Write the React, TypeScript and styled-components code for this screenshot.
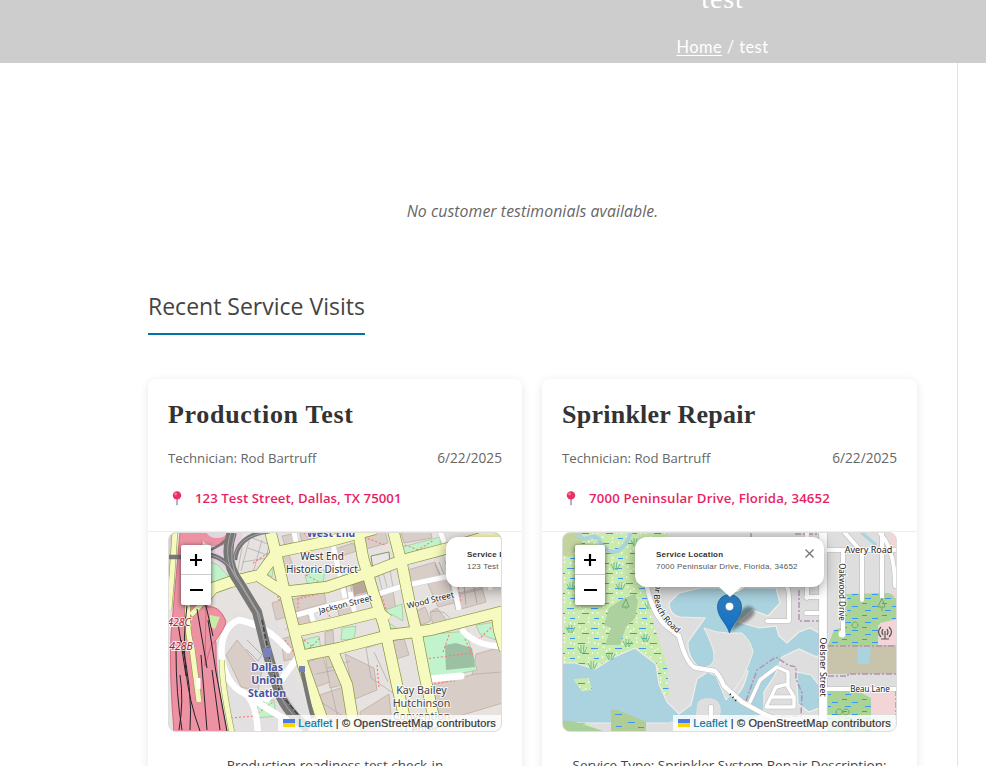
import React from "react";
import styled, { createGlobalStyle } from "styled-components";

const Global = createGlobalStyle`
  * { box-sizing: border-box; }
  html, body { margin: 0; background: #fff; overflow: hidden; }
  body { font-family: "Open Sans", "Noto Sans", sans-serif; color: #666; }
`;

const Page = styled.div`
  height: 766px;
  display: flex;
  flex-direction: column;
  overflow: hidden;
`;

const Banner = styled.header`
  flex: 0 0 63px;
  background: #cdcdcd;
  color: #fff;
  padding-left: 459px;
  overflow: hidden;
  text-align: center;
`;

const BannerTitle = styled.h1`
  margin: -20px 0 0;
  font: 400 28px/38px "Liberation Serif", serif;
  letter-spacing: 0.9px;
`;

const Crumbs = styled.nav`
  margin-top: 17px;
  font: 400 16.5px/24px Lato, sans-serif;
  letter-spacing: 0.4px;
  a { color: #fff; text-decoration: underline; text-underline-offset: 2px; }
`;

const Content = styled.main`
  flex: 1;
  width: 958px;
  border-right: 1px solid #e2e2e2;
  padding: 136px 40px 0 148px;
`;

const EmptyNote = styled.p`
  margin: 0;
  text-align: center;
  font-style: italic;
  font-size: 15.8px;
  line-height: 24px;
  letter-spacing: 0.08px;
`;

const SectionTitle = styled.h2`
  display: inline-block;
  margin: 64px 0 0;
  height: 48px;
  width: 217px;
  white-space: nowrap;
  border-bottom: 2px solid #0073aa;
  color: #444;
  font-weight: 400;
  font-size: 23px;
  line-height: 38px;
`;

const Grid = styled.div`
  margin-top: 44px;
  display: grid;
  grid-template-columns: 374px 375px;
  gap: 20px;
`;

const Card = styled.article`
  height: 460px;
  background: #fff;
  border-radius: 8px;
  box-shadow: 0 2px 10px rgba(0, 0, 0, 0.1);
`;

const CardHead = styled.div`
  height: 153px;
  padding: 20px 20px 0;
  border-bottom: 1px solid #eee;
`;

const CardTitle = styled.h3<{ $track: number }>`
  margin: 0;
  color: #333;
  font: 700 26px/32px "Liberation Serif", serif;
  letter-spacing: ${(p) => p.$track}px;
`;

const Meta = styled.div`
  display: flex;
  justify-content: space-between;
  margin-top: 17px;
  font-size: 13.2px;
  line-height: 20px;
  time { font-size: 13.7px; }
`;

const Address = styled.div<{ $track: number }>`
  display: flex;
  align-items: center;
  margin-top: 20px;
  height: 20px;
  color: #e91e63;
  font-size: 13.2px;
  font-weight: 600;
  letter-spacing: ${(p) => p.$track}px;
  svg { margin: 1px 12px 0 4px; }
`;

const MapFrame = styled.div`
  position: relative;
  height: 200px;
  margin: 0 20px;
  border: 1px solid #ddd;
  border-radius: 8px;
  overflow: hidden;
  background: #ddd;
`;

const MapCanvas = styled.svg`
  display: block;
  width: 100%;
  height: 100%;
`;

const ZoomBar = styled.div`
  position: absolute;
  left: 12px;
  top: 12px;
  width: 30px;
  border-radius: 2px;
  background: #fff;
  box-shadow: 0 1px 5px rgba(0, 0, 0, 0.65);
`;

const ZoomButton = styled.button`
  display: grid;
  place-items: center;
  width: 30px;
  height: 30px;
  padding: 0;
  border: 0;
  background: transparent;
  &:first-child { border-bottom: 1px solid #ccc; }
`;

const Popup = styled.div<{ $left: number }>`
  position: absolute;
  left: ${(p) => p.$left}px;
  top: 4px;
  width: 189px;
  height: 50px;
  padding: 12px 0 0 21px;
  border-radius: 12px;
  background: #fff;
  box-shadow: 0 3px 14px rgba(0, 0, 0, 0.4);
  color: #333;
  font: 400 8px/11px "Liberation Sans", sans-serif;
  letter-spacing: 0.2px;
  white-space: nowrap;
  strong { display: block; font-size: 8px; line-height: 12px; color: #333; }
  span { color: #555; }
`;

const Close = styled.svg`
  position: absolute;
  right: 10px;
  top: 12px;
`;

const Tip = styled.svg`
  position: absolute;
  left: 151px;
  top: 53px;
`;

const Attribution = styled.div`
  position: absolute;
  right: 0;
  bottom: 0;
  display: flex;
  align-items: center;
  height: 16px;
  padding: 0 5px 1px;
  background: rgba(255, 255, 255, 0.8);
  color: #333;
  font: 400 11px/14px "Liberation Sans", sans-serif;
  letter-spacing: 0.17px;
  -webkit-text-stroke: 0.2px currentColor;
  white-space: pre;
  a { color: #0078a8; }
  svg { margin-right: 3px; }
`;

const Body = styled.p`
  margin: 22px 10px 0;
  text-align: center;
  color: #444;
  font-size: 13.5px;
  line-height: 22px;
  white-space: nowrap;
`;

function PushPin() {
  return (
    <svg width="11" height="15" viewBox="0 0 11 15">
      <path d="M4.2 7h1.7v7.2H4.2z" fill="#a9a3b3" />
      <circle cx="5" cy="4.4" r="4.2" fill="#ec2f65" />
      <circle cx="3.6" cy="3" r="1.4" fill="#ff7898" />
    </svg>
  );
}

function ZoomControls() {
  return (
    <ZoomBar>
      <ZoomButton aria-label="Zoom in">
        <svg width="14" height="14"><path d="M1 7h12M7 1v12" stroke="#000" strokeWidth="2.2" /></svg>
      </ZoomButton>
      <ZoomButton aria-label="Zoom out">
        <svg width="14" height="14"><path d="M1 7h13" stroke="#000" strokeWidth="2" /></svg>
      </ZoomButton>
    </ZoomBar>
  );
}

function Credits() {
  return (
    <Attribution>
      <svg width="12" height="8"><path d="M0 0h12v4H0z" fill="#4C7BE1" /><path d="M0 4h12v4H0z" fill="#FFD500" /></svg>
      <a>Leaflet</a> | © OpenStreetMap contributors
    </Attribution>
  );
}

const arterials = [
  "M188 622L193 612L213 588L230 582L260 575L277 552L330 541L375 529",
  "M270 530L277 558L283 585L293 625L303 665L327 733",
  "M260 577L283 592L327 587L375 571L403 560L445 549L505 531",
  "M293 632L330 624L378 612L388 620",
  "M296 657L340 648L390 635L430 630L505 611",
  "M358 530L363 558L373 592L384 625L397 685L408 733",
  "M393 530L402 565L410 605L416 630L424 672L437 733",
  "M333 652L347 685L355 733",
  "M497 614L499 630L505 650",
];
const minors = [
  "M293 616L340 603L375 595L403 586L445 577L505 563",
  "M310 609L316 632", "M350 592L356 618", "M445 549L452 575L459 610",
  "M484 570L491 590", "M294 532L297 546", "M440 531L447 549", "M333 545L345 598",
];
const blocks = [
  "282,536 292,534 296,546 286,549", "300,533 312,532 314,541 302,544", "364,535 385,531 388,543 366,549",
  "335,549 353,543 357,551 338,557", "401,533 430,529 432,538 404,543", "279,558 289,554 294,570 283,573",
  "350,584 365,580 369,593 353,597", "291,600 324,590 326,603 295,612", "295,618 308,615 312,631 299,633",
  "378,595 393,591 396,610 382,613", "404,571 435,562 441,576 408,584", "427,582 448,578 458,602 438,607",
  "416,611 425,607 431,621 421,625", "430,612 437,608 448,622 433,625", "455,594 482,587 486,602 458,610",
  "337,605 350,602 355,618 340,622", "281,639 292,636 296,658 284,661", "325,632 333,630 334,648 325,650",
  "306,663 323,656 330,682 313,688", "325,654 338,651 346,684 330,688", "317,696 346,686 353,715 327,722",
  "345,654 374,668 377,690 355,699", "393,641 404,638 409,655 396,659", "476,654 505,646 505,690 472,675",
  "428,686 475,674 503,672 503,703 442,721", "360,712 389,694 392,725 361,731", "226,655 237,640 262,670 258,691 241,687",
  "272,603 284,599 286,617 276,620", "168,535 174,535 174,590 168,587", "478,538 502,532 502,547 485,549",
];
const greens = [
  "210,562 218,565 232,580 211,582", "264,571 274,562 272,577", "269,582 280,583 276,590",
  "305,575 325,570 323,583 308,586", "402,547 440,537 441,552 405,560", "422,635 468,631 469,642 477,670 429,680",
  "375,614 402,604 403,621 393,615", "385,627 391,624 399,630", "476,625 496,622 496,640 480,634",
  "210,616 219,618 215,631 209,627", "303,640 319,636 321,650 306,653", "258,703 274,700 276,716 257,718",
  "342,628 356,626 354,639 341,640",
];

function DallasMap() {
  return (
    <MapCanvas viewBox="169 533 332 198" preserveAspectRatio="none">
      <rect x="160" y="525" width="350" height="215" fill="#e6e2df" />
      <path d="M203 532h40l-10 45-23-22z" fill="#e6d3e0" />
      <path d="M207 653l27-40 42 8 38 110h-87z" fill="#e2e0e0" />
      {blocks.map((p) => <polygon key={p} points={p} fill="#d8cdc7" stroke="#bba99e" strokeWidth=".7" />)}
      {greens.map((p) => <polygon key={p} points={p} fill="#c1f4cc" stroke="#9eb98b" strokeWidth=".6" />)}
      <polygon points="445,645 456,643 472,648 475,667 446,670" fill="#9dbfa4" />
      <polygon points="371,556 389,552 390,565 373,569" fill="#e9e7e7" stroke="#90945a" />
      <polygon points="352,584 364,581 368,592 354,595" fill="#b9a79d" />
      <g stroke="#aaa" fill="none" strokeWidth=".7">
        <path d="M247 536l26 10-4 22M243 542l-6 33 26-6M248 548l22 8M242 562l26-4M250 537l-9 34M262 540l-9 33M269 545l-6 26" />
        <path d="M374 575l16-5 3 17-15 4zM378 574l4 15M383 572l4 15M332 590l14-5 2 15-15 4M166 650v80M174 690v41M366 648l18-6 12 53-25-17zM374 652l14 30M328 668l22-7M316 674l19-4M338 657l10 28M457 595l25-6M456 610l-8-31M430 612q17-5 23 13M285 630l5-4M318 700l31 20M331 688l8 35M469 538l5 23" />
        <path d="M435 564l5 12M439 562l5 12M445 560l4 12M464 585l2 20M473 583l4 20M247 640l15 15-4 6-12-12" stroke="#9f9ba2" />
      </g>
      <g stroke="#ff7676" strokeWidth="1.1" strokeDasharray="2 2" fill="none">
        <path d="M304 533l8 9 20-3M253 563l15-10M278 592v8l10-1M306 575l17 9M364 537l21 8M405 545l32 12M407 557l27-17M318 594l-20 5v20M325 608l8 14M380 592l7 20M452 552l9 50M355 594v20M304 640l18 14M304 654l16-16M425 659l47-6M449 635l-6 17M465 639l8 17M377 665l2 22M231 718l23-2 19-14M285 640l14 20M478 640l18-17M426 684l29-3" />
      </g>
      <g fill="none" stroke="#cfcfcf" strokeWidth="6">{minors.map((d) => <path key={d} d={d} />)}</g>
      <g fill="none" stroke="#fff" strokeWidth="5">{minors.map((d) => <path key={d} d={d} />)}</g>
      <g fill="none" stroke="#fff" strokeLinecap="round">
        <path d="M239 620C213 629 217 681 244 693Q256 700 258 733M239 620Q267 625 288 650M298 657L267 699L250 694M244 693Q270 711 287 720" strokeWidth="6.5" />
        <path d="M429 679l32-3" strokeWidth="7" />
        <path d="M463 631q13 14 34 15" strokeWidth="6" />
      </g>
      <g fill="none" stroke="#8c963f" strokeWidth="12">{arterials.map((d) => <path key={d} d={d} />)}</g>
      <g fill="none" stroke="#f7fabf" strokeWidth="10.6">{arterials.map((d) => <path key={d} d={d} />)}</g>
      <path d="M175 531L172 575L169 610M222 660Q221 680 232 733" stroke="#8c963f" strokeWidth="6" fill="none" />
      <path d="M175 531L172 575L169 610M222 660Q221 680 232 733" stroke="#f7fabf" strokeWidth="5" fill="none" />
      <g fill="#ec92a2" stroke="#cb5d75" strokeWidth=".8">
        <path d="M180 532h22q-1 42 5 73l9 38q-1 35 11 90h-53q-5-60-3-99z" />
        <path d="M206 607q13-3 20 14 0 7-15 25l-6 20z" />
      </g>
      <path d="M202 532q3 10 15 10 12 0 15-10" fill="none" stroke="#ec92a2" strokeWidth="8" />
      <polygon points="210,615 220,617 215,629 210,627" fill="#c9eba8" />
      <path d="M188 600q-2 30 4 48l7 54M191 615l15-16" stroke="#8c963f" strokeWidth="6" fill="none" />
      <path d="M188 600q-2 30 4 48l7 54M191 615l15-16" stroke="#f7fabf" strokeWidth="5" fill="none" />
      <path d="M187 606q-9 65 13 125M176 650q0 45 6 80M181 640q12 50 9 90M197 609l10 59M208 620l8 52 11 59M201 655l6 75M178 623l8 53M180 675q4 26-1 55M205 602l8 34M212 670l8 60" stroke="#27222a" strokeWidth="1" fill="none" />
      <path d="M196.500 678h4v11h-4z" fill="#fff" />
      <g fill="none" stroke="#777">
        <path d="M168 557h14M210 555q17 3 28 24" strokeWidth="4.500" />
        <path d="M205 552q20-7 27-20" strokeWidth="2.500" />
        <path d="M235 560q2-25 35-29" strokeWidth="4.500" />
        <path d="M232 532Q222 560 240 584L257 612L266 648L277 686Q283 710 309 729" strokeWidth="10" />
        <path d="M302 670q7 34 11 48" strokeWidth="4" />
      </g>
      <g fill="none" stroke="#bbb" strokeWidth=".7">
        <path d="M231 532Q221 560 240 584L257 612L266 648L277 686Q283 710 309 729M235 533q-10 30 8 54l16 27 9 36 12 37 19 27" />
        <path d="M234 560q2-24 35-28M210 555q17 3 28 24" />
      </g>
      <path d="M262 620l8 41 10 32 20 24" fill="none" stroke="#444" strokeWidth="1.600" strokeDasharray="5 2" />
      <path d="M263 648h8v9h-8zM299 666h6v6h-6z" fill="#7981b6" />
      <g fontFamily="Noto Sans, sans-serif" textAnchor="middle" stroke="#fff" strokeWidth="2" paintOrder="stroke" strokeOpacity=".8">
        <g fontSize="10" fill="#333">
          <text x="322" y="560">West End</text><text x="322" y="573">Historic District</text>
        </g>
        <g fontSize="8.300" fill="#222">
          <text transform="translate(346 607) rotate(-14)">Jackson Street</text>
          <text transform="translate(431 603) rotate(-14)">Wood Street</text>
        </g>
        <g fontSize="10.700" fill="#444">
          <text x="421.500" y="694">Kay Bailey</text><text x="421.500" y="707">Hutchinson</text><text x="421.500" y="720">Convention</text><text x="421.500" y="733">Center</text>
        </g>
        <g fontSize="10.600" fontWeight="700" fill="#4752a3">
          <text x="331" y="537">West End</text>
          <text x="267" y="671">Dallas</text><text x="267" y="684">Union</text><text x="267" y="697">Station</text>
        </g>
        <g fontSize="10.500" fontStyle="italic" fill="#a91e30"><text x="179" y="626">428C</text><text x="181" y="650">428B</text></g>
      </g>
    </MapCanvas>
  );
}

const reeds = [[615, 567], [620, 587], [585, 602], [649, 606], [570, 630], [582, 650], [645, 639], [627, 644], [610, 657], [592, 666], [571, 587], [635, 543]];

function FloridaMap() {
  return (
    <MapCanvas viewBox="563 533 333 198" preserveAspectRatio="none">
      <defs>
        <pattern id="marsh" width="24" height="20" patternUnits="userSpaceOnUse">
          <rect width="24" height="20" fill="#c9ebae" />
          <path d="M2 3.500h7M15 8.500h7M6 13.500h7M18 18.500h5" stroke="#3a96f5" strokeWidth="1.100" />
          <path d="M12 2h1.300M18 3h1.300M3 7h1.300M9 9h1.300M16 13h1.300M2 17h1.300M12 18h1.300M21 13h1.300M22 4h1.300M6 11h1.300" stroke="#fff" strokeWidth="1.400" />
        </pattern>
        <pattern id="wood" width="20" height="12" patternUnits="userSpaceOnUse">
          <rect width="20" height="12" fill="#aad495" />
          <path d="M2 3.500h5M12 6.500h6M5 10.500h6" stroke="#3a96f5" />
        </pattern>
        <linearGradient id="pin" x1="0" y1="0" x2="0" y2="1"><stop stopColor="#2e7ebd" /><stop offset="1" stopColor="#126fc6" /></linearGradient>
        <filter id="soft"><feGaussianBlur stdDeviation="1.7" /></filter>
      </defs>
      <rect x="555" y="525" width="350" height="215" fill="#dedede" />
      <path d="M560 530h115q-32 20-31 48l10 48 13 39 2 30-107 40z" fill="url(#marsh)" />
      <path d="M562 533h20v10l-12 14-8-2z" fill="#c2d39e" />
      <path d="M577 530q2 11 11 8 10-5 13 6 10 11 17 7 10-7 13-20" fill="none" stroke="#aad3df" strokeWidth="4" />
      <path d="M624 598l11-4 3 7-3 17-9 9-6 18h-15l6-17-7-3 5-17z" fill="#add19e" />
      <g fill="#aad3df" stroke="#f1eee8" strokeWidth="1.2">
        <path d="M558 663h17l20 6 17-11 23-10 21 16 3 20 8 18 12 12 12-9 6-26 11-7 13 5 7 15 5 6q10-5 15-27l-28-2-18 1q-15-11-14-28l17-24-24-1q-11-1-12-14l10-10 22-5h75l4 15-12 13-16-6-13 12 20 6 17-2 3 10 8 7 12-11 11-4 11 6 6 12-10 11-18-8-17 8-7 18-11 17v22l-19 9H558z" />
        <path d="M797 672l14 3 8 10 2 22-12 5-11-8-1-20z" />
      </g>
      <path d="M704 628q12 5 24 5h14q9 8 11 19-4 13-9 23l-11 17-7 8-10-24-18-8q18 1 16-14-1-8-10-26z" fill="#dedede" stroke="#f1eee8" />
      <path d="M697 706q0-8 13-8 10 1 11 12l-3 21h-24z" fill="#dedede" />
      <path d="M573 679l16-1 3 12-10 1z" fill="url(#marsh)" />
      <path d="M560 721q10-1 19 2l24 8h-43z" fill="#a9cf9b" />
      <path d="M611 710h7l28 12v10h-35z" fill="#b1cc94" />
      <path d="M615 714.500h7M628 722.500h7M616 726.500h6M638 727.500h6" stroke="#3a96f5" />
      <path d="M660 732v-6l12-5 10 10" fill="#dedede" />
      <g fill="none" stroke="#69b985" strokeWidth=".9">
        {reeds.map(([x, y]) => <path key={`${x}-${y}`} d={`M${x - 4} ${y - 3}l3 6M${x - 1} ${y - 5}v8M${x + 2} ${y - 5}l-1 8M${x + 5} ${y - 3}l-3 6`} />)}
      </g>
      <path d="M845 594l44-1 7 4v22l-18 6v20h-50l6-15 11-3z" fill="url(#wood)" />
      <path d="M888 532h10v66h-4V555zM880 623l17-4v28h-17z" fill="#f3d5d7" />
      <path d="M828 645h70v29h-70z" fill="#c8c4ab" />
      <path d="M857 647h14l-2 17h-11z" fill="#aad3df" />
      <path d="M828 691h30l13 7v34h-43z" fill="url(#wood)" />
      <path d="M871 692h27v22h-27z" fill="#f3d5d7" />
      <path d="M861 532l15 13" stroke="#aad3df" strokeWidth="3" />
      <g fill="none" stroke="#b590b1" strokeWidth="1.5" strokeDasharray="6 2 2 2">
        <path d="M795 534h28v80M751 533v15M799 590v31h25v110M828 646h69M828 676h20v-2h48M896 690v35M746 701l11-31 19-13 12 8 8 2v12l6 14-1 23h-20" />
      </g>
      {["#bbb", "#fff"].map((c, i) => (
        <g key={c} fill="none" stroke={c} strokeLinecap="round" strokeLinejoin="round">
          <path d="M823 530v204" strokeWidth={9 - i * 1.2} />
          <path d="M800 550h100M843 550v84M862 600v-48l-18-20M882 597v-65M877 530q18 16 18 56M823 689h80M823 597h-17M823 613h-17" strokeWidth={5 - i} />
          <path d="M786 560v25q3 5 3 10v26h-22M737 590l12-7h37M807 533v65" strokeWidth={5 - i} />
          <path d="M645 575q5 36 20 50l14 11q8 31 18 32l18 3q5 5 9 15l18 16 20 11 23 10M711 707v20" strokeWidth={5.5 - i} />
          <path d="M750 702l10-22 17-13 11 5v15l6 10v10h-28l10-20 12-3M772 697h21" strokeWidth={4.5 - i} />
        </g>
      ))}
      <circle cx="842" cy="634" r="3.500" fill="#fff" />
      <path d="M730 694l7 8" stroke="#222" strokeWidth="2" strokeDasharray="1 3" />
      <g fill="none" stroke="#72a66e"><path d="M882 598l-4 9h7zM882 607v4M626 599l-4 8h7zM626 607v2M839 709a3 3 0 1 0 .1 0zM846 709a3 3 0 1 0 .1 0zM839 715v4M846 715v4M855 622a3 3 0 1 0 .1 0z" /></g>
      <g fill="none" stroke="#555" strokeWidth="1.2"><path d="M881 627q-5 5 0 10M889 627q5 5 0 10M883 629q-2 3 0 6M887 629q2 3 0 6M885 631v8M881 639h8" /></g>
      <g fontFamily="Noto Sans, sans-serif" fontSize="8.5" textAnchor="middle" fill="#222" stroke="#fff" strokeWidth="2" paintOrder="stroke" strokeOpacity=".85">
        <text x="868.500" y="553" fontSize="9">Avery Road</text>
        <text x="870" y="692" fontSize="8">Beau Lane</text>
        <text transform="translate(839 592) rotate(90)" fontSize="8">Oakwood Drive</text>
        <text transform="translate(819.500 667) rotate(90)" fontSize="8.800">Oelsner Street</text>
        <path id="beach" d="M657 583Q650 596 659 613Q666 626 688 642" fill="none" stroke="none" />
        <text textAnchor="start"><textPath href="#beach" startOffset="1">or Beach Road</textPath></text>
      </g>
      <path d="M730 632l10-20q7-9 13-4 5 5-6 13z" fill="#000" opacity=".4" filter="url(#soft)" />
      <path d="M729.500 633c-2-9-12-15-12-26.500a12 12 0 0 1 24 0c0 11.500-10 17.500-12 26.500z" fill="url(#pin)" stroke="#2369a2" />
      <circle cx="729.500" cy="606.500" r="4.300" fill="#fff" stroke="#2369a2" strokeWidth=".7" />
    </MapCanvas>
  );
}

export default function App() {
  return (
    <Page>
      <Global />
      <Banner>
        <BannerTitle>test</BannerTitle>
        <Crumbs><a>Home</a> / test</Crumbs>
      </Banner>
      <Content>
        <EmptyNote>No customer testimonials available.</EmptyNote>
        <SectionTitle>Recent Service Visits</SectionTitle>
        <Grid>
          <Card>
            <CardHead>
              <CardTitle $track={0.7}>Production Test</CardTitle>
              <Meta><span>Technician: Rod Bartruff</span><time>6/22/2025</time></Meta>
              <Address $track={0.07}><PushPin />123 Test Street, Dallas, TX 75001</Address>
            </CardHead>
            <MapFrame>
              <DallasMap />
              <Popup $left={277}><strong>Service Location</strong><span>123 Test Street, Dallas, TX 75001</span></Popup>
              <ZoomControls />
              <Credits />
            </MapFrame>
            <Body>Production readiness test check-in</Body>
          </Card>
          <Card>
            <CardHead>
              <CardTitle $track={0.25}>Sprinkler Repair</CardTitle>
              <Meta><span>Technician: Rod Bartruff</span><time>6/22/2025</time></Meta>
              <Address $track={0.18}><PushPin />7000 Peninsular Drive, Florida, 34652</Address>
            </CardHead>
            <MapFrame>
              <FloridaMap />
              <Popup $left={72}>
                <strong>Service Location</strong><span>7000 Peninsular Drive, Florida, 34652</span>
                <Close width="9" height="9"><path d="M.5.500l8 8M8.500.500l-8 8" stroke="#757575" strokeWidth="1.300" /></Close>
              </Popup>
              <Tip width="32" height="13"><path d="M4 0h24L16 11z" fill="#fff" /></Tip>
              <ZoomControls />
              <Credits />
            </MapFrame>
            <Body>Service Type: Sprinkler System Repair Description:</Body>
          </Card>
        </Grid>
      </Content>
    </Page>
  );
}
